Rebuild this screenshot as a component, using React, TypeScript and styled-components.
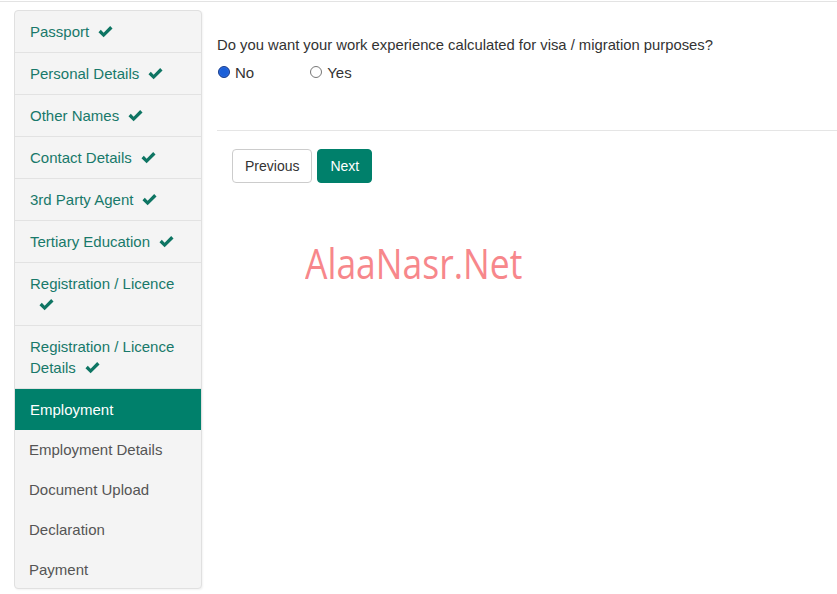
import React from "react";
import styled, { createGlobalStyle } from "styled-components";

const Global = createGlobalStyle`
  html, body { margin: 0; padding: 0; background: #fff; }
  body { font-family: "Liberation Sans", Arial, sans-serif; color: #333; }
  * { box-sizing: border-box; }
`;

const TEAL = "#00806b";

const Page = styled.div`
  width: 837px;
  height: 594px;
  border-top: 1px solid #e3e3e3;
  margin-top: 1px;
  position: relative;
  overflow: hidden;
`;

const Layout = styled.div`
  display: flex;
  align-items: flex-start;
  padding: 8px 0 0 14px;
`;

const Sidebar = styled.nav`
  width: 188px;
  background: #f4f4f4;
  border: 1px solid #e0e0e0;
  border-radius: 4px;
  box-shadow: 1px 1px 2px rgba(0, 0, 0, 0.05);
  display: flex;
  flex-direction: column;
  overflow: hidden;
`;

const Item = styled.div<{ $done?: boolean; $active?: boolean; $last?: boolean }>`
  padding: ${(p) =>
    p.$done || p.$active ? "10px 15px 10px 15px" : p.$last ? "9px 15px 8px 14px" : "9px 15px 10px 14px"};
  font-size: 15px;
  line-height: 21px;
  color: ${(p) => (p.$active ? "#fff" : p.$done ? "#18796a" : "#555")};
  background: ${(p) => (p.$active ? TEAL : "transparent")};
  border-bottom: ${(p) => (p.$done ? "1px solid #e2e2e2" : "none")};
`;

const Check = styled.svg`
  display: inline-block;
  width: 15px;
  height: 13px;
  margin-left: 9px;
  vertical-align: -1px;
  fill: #0e7563;
`;

const Main = styled.main`
  flex: 1;
  margin-left: 15px;
  padding-top: 25px;
`;

const Question = styled.p`
  margin: 0;
  font-size: 14.8px;
  line-height: 20px;
  color: #333;
`;

const RadioRow = styled.div`
  display: flex;
  gap: 56px;
  margin-top: 9px;
  margin-left: 1px;
`;

const RadioLabel = styled.label`
  display: flex;
  align-items: center;
  font-size: 15px;
  line-height: 18px;
  color: #333;
`;

const RadioDot = styled.span<{ $on?: boolean }>`
  width: 12px;
  height: 12px;
  border-radius: 50%;
  margin-right: 5px;
  margin-top: -3px;
  border: 1px solid ${(p) => (p.$on ? "#1a3e8c" : "#777")};
  background: ${(p) => (p.$on ? "#1a5fd8" : "#fff")};
  box-shadow: ${(p) => (p.$on ? "inset 0 0 0 1px #2d6be0" : "none")};
`;

const Rule = styled.hr`
  border: 0;
  border-top: 1px solid #e5e5e5;
  margin: 48px 0 0 0;
`;

const Buttons = styled.div`
  display: flex;
  gap: 5px;
  margin: 18px 0 0 15px;
`;

const Btn = styled.button<{ $primary?: boolean }>`
  font-family: "Liberation Sans", Arial, sans-serif;
  font-size: 14px;
  line-height: 20px;
  padding: 6px 12px;
  height: 34px;
  border-radius: 4px;
  border: 1px solid ${(p) => (p.$primary ? TEAL : "#ccc")};
  background: ${(p) => (p.$primary ? TEAL : "#fff")};
  color: ${(p) => (p.$primary ? "#fff" : "#333")};
`;

const Watermark = styled.div`
  position: absolute;
  left: 305px;
  top: 232px;
  font-family: "Open Sans", "Noto Sans", sans-serif;
  font-size: 42px;
  font-weight: 400;
  color: #f7878b;
  transform: scaleX(0.845);
  transform-origin: left top;
  white-space: nowrap;
`;

const CheckIcon = () => (
  <Check viewBox="0 0 16 13">
    <path d="M0.5 7.2 L3 4.7 L6 7.7 L13 0.7 L15.5 3.2 L6 12.7 Z" />
  </Check>
);

const done = [
  "Passport",
  "Personal Details",
  "Other Names",
  "Contact Details",
  "3rd Party Agent",
  "Tertiary Education",
];

export default function App() {
  return (
    <>
      <Global />
      <Page>
        <Layout>
          <Sidebar>
            {done.map((t) => (
              <Item key={t} $done>
                {t}
                <CheckIcon />
              </Item>
            ))}
            <Item $done>
              Registration / Licence
              <br />
              <CheckIcon />
            </Item>
            <Item $done>
              Registration / Licence Details
              <CheckIcon />
            </Item>
            <Item $active>Employment</Item>
            <Item>Employment Details</Item>
            <Item>Document Upload</Item>
            <Item>Declaration</Item>
            <Item $last>Payment</Item>
          </Sidebar>
          <Main>
            <Question>
              Do you want your work experience calculated for visa / migration purposes?
            </Question>
            <RadioRow>
              <RadioLabel>
                <RadioDot $on />
                No
              </RadioLabel>
              <RadioLabel>
                <RadioDot />
                Yes
              </RadioLabel>
            </RadioRow>
            <Rule />
            <Buttons>
              <Btn>Previous</Btn>
              <Btn $primary>Next</Btn>
            </Buttons>
          </Main>
        </Layout>
        <Watermark>AlaaNasr.Net</Watermark>
      </Page>
    </>
  );
}
